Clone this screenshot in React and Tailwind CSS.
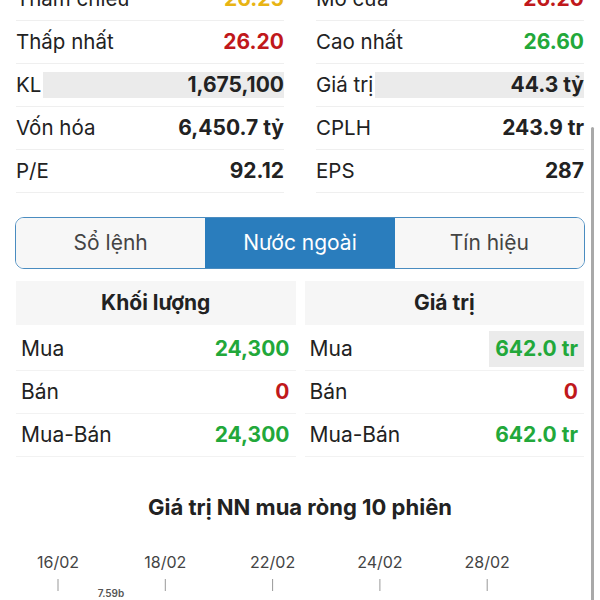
import React from "react";

const Row = ({ label, value, color = "text-[#222]", hl = false }) => (
  <div className="h-[43px] flex items-center justify-between border-b border-[#efefef]">
    <span className="text-[20.5px] text-[#222] whitespace-nowrap">{label}</span>
    <span
      className={`text-[21px] font-bold ${color} ${hl ? "flex-1 ml-[2px] h-[26px] bg-[#ebebeb] flex items-center justify-end" : ""}`}
    >
      {value}
    </span>
  </div>
);

const TRow = ({ label, value, color, hl = false }) => (
  <div className="h-[43px] flex items-center justify-between border-b border-[#f2f2f2] pl-[5px]">
    <span className="text-[21px] text-[#222]">{label}</span>
    <span
      className={`text-[21px] font-bold ${color} px-[6px] ${hl ? "h-[36px] bg-[#ebebeb] flex items-center" : ""}`}
    >
      {value}
    </span>
  </div>
);

const Table = ({ title, rows }) => (
  <div>
    <div className="h-[44px] bg-[#f6f6f6] flex items-center justify-center text-[21px] font-bold text-[#222]">
      {title}
    </div>
    <div className="h-[3px]" />
    {rows.map((r, i) => (
      <TRow key={i} {...r} />
    ))}
  </div>
);

export default function App() {
  const green = "text-[#22a83a]";
  const red = "text-[#c0181b]";
  const dates = ["16/02", "18/02", "22/02", "24/02", "28/02"];
  return (
    <div className="w-[600px] h-[600px] overflow-hidden bg-white relative font-['Inter',sans-serif]">
      <div className="absolute left-[591px] top-[127px] w-[3px] h-[480px] bg-[#a9a9a9] rounded-full" />
      <div className="-mt-[22px] px-4 grid grid-cols-2 gap-x-8">
        <div>
          <Row label="Tham chiếu" value="26.25" color="text-[#e8b414]" />
          <Row label="Thấp nhất" value="26.20" color={red} />
          <Row label="KL" value="1,675,100" hl />
          <Row label="Vốn hóa" value="6,450.7 tỷ" />
          <Row label="P/E" value="92.12" />
        </div>
        <div>
          <Row label="Mở cửa" value="26.20" color={red} />
          <Row label="Cao nhất" value="26.60" color={green} />
          <Row label="Giá trị" value="44.3 tỷ" hl />
          <Row label="CPLH" value="243.9 tr" />
          <Row label="EPS" value="287" />
        </div>
      </div>

      <div className="mt-[24px] mx-[15px] h-[52px] flex rounded-[9px] border-[1.5px] border-[#4a8cc0] overflow-hidden">
        <div className="flex-1 bg-[#f7f7f7] flex items-center justify-center text-[21px] text-[#444]">Sổ lệnh</div>
        <div className="flex-1 bg-[#2a7dbd] flex items-center justify-center text-[21px] text-white">Nước ngoài</div>
        <div className="flex-1 bg-[#f7f7f7] flex items-center justify-center text-[21px] text-[#444]">Tín hiệu</div>
      </div>

      <div className="mt-[12px] px-4 grid grid-cols-2 gap-x-[9px]">
        <Table
          title="Khối lượng"
          rows={[
            { label: "Mua", value: "24,300", color: green },
            { label: "Bán", value: "0", color: red },
            { label: "Mua-Bán", value: "24,300", color: green },
          ]}
        />
        <Table
          title="Giá trị"
          rows={[
            { label: "Mua", value: "642.0 tr", color: green, hl: true },
            { label: "Bán", value: "0", color: red },
            { label: "Mua-Bán", value: "642.0 tr", color: green },
          ]}
        />
      </div>

      <div className="mt-[34px] text-center text-[22px] font-bold text-[#222]">
        Giá trị NN mua ròng 10 phiên
      </div>

      <svg className="block mt-[28px]" width="600" height="70" viewBox="0 0 600 70">
        {dates.map((d, i) => {
          const x = 58 + i * 107.3;
          return (
            <g key={d}>
              <text x={x} y="16" textAnchor="middle" fontSize="16" fill="#444" fontFamily="Inter, sans-serif">
                {d}
              </text>
              <line x1={x} y1="27" x2={x} y2="39" stroke="#999" strokeWidth="1" />
            </g>
          );
        })}
        <text x="111" y="45" textAnchor="middle" fontSize="10" fontWeight="600" fill="#555" fontFamily="Inter, sans-serif">
          7.59b
        </text>
      </svg>
    </div>
  );
}
